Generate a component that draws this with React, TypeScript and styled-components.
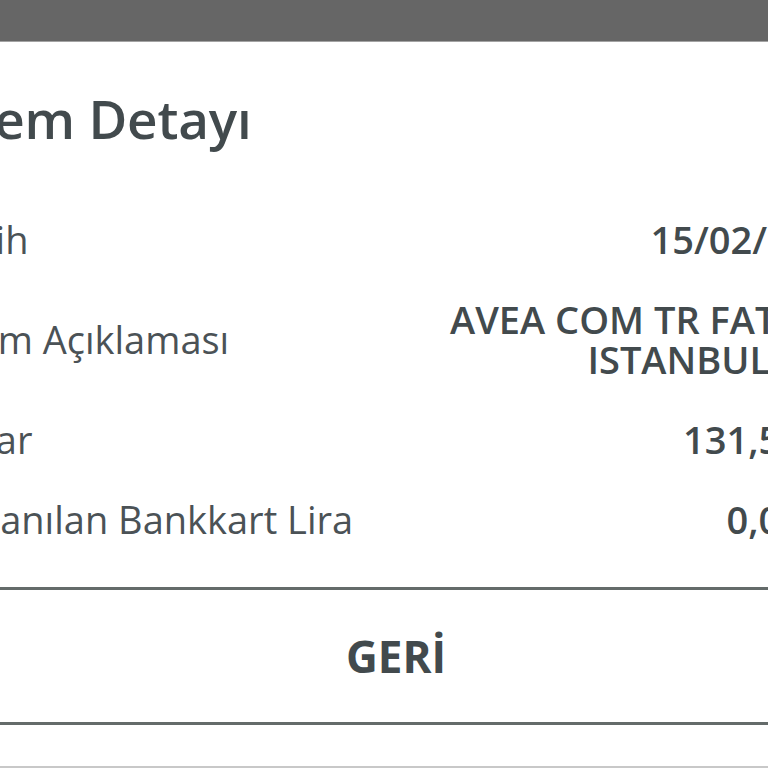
import styled, { createGlobalStyle } from 'styled-components';

const GlobalStyle = createGlobalStyle`
  html, body {
    margin: 0;
    padding: 0;
    background: #c8c8c8;
  }
  body {
    font-family: 'Open Sans', 'Liberation Sans', sans-serif;
    overflow: hidden;
  }
`;

const details = [
  { id: 'date', label: 'İşlem Tarih', value: ['15/02/2017'] },
  { id: 'desc', label: 'İşlem Açıklaması', value: ['AVEA COM TR FATURA', 'ISTANBUL TUR'] },
  { id: 'amount', label: 'Tutar', value: ['131,50 TL'] },
  { id: 'points', label: 'Kazanılan Bankkart Lira', value: ['0,00 TL'] },
];

const App = () => {
  return (
    <>
      <GlobalStyle />
      <Screen>
        <Backdrop />
        <Dialog>
          <Body>
            <Title>İşlem Detayı</Title>
            <List>
              {details.map((item) => (
                <Row key={item.id}>
                  <Label>{item.id === 'date' ? 'Tarih' : item.label}</Label>
                  <Value>
                    {item.value.map((line) => (
                      <span key={line}>{line}</span>
                    ))}
                  </Value>
                </Row>
              ))}
            </List>
          </Body>
          <Actions>
            <BackButton type="button">GERİ</BackButton>
          </Actions>
        </Dialog>
      </Screen>
    </>
  );
};

const Screen = styled.div`
  width: 768px;
  height: 768px;
  overflow: hidden;
  display: flex;
  flex-direction: column;
  background: #c8c8c8;
`;

const Backdrop = styled.div`
  height: 41px;
  flex-shrink: 0;
  background: #666666;
  border-bottom: 1px solid #a3a3a3;
`;

const Dialog = styled.section`
  width: 980px;
  margin-left: -94px;
  background: #ffffff;
  padding-bottom: 41px;
  flex-shrink: 0;
`;

const Body = styled.div`
  padding: 41px 32px 28px;
`;

const Title = styled.h2`
  margin: 0;
  font-size: 53px;
  line-height: 72px;
  font-weight: 600;
  color: #424a4d;
  letter-spacing: -0.2px;
`;

const List = styled.div`
  margin-top: 44px;
  display: flex;
  flex-direction: column;
`;

const Row = styled.div`
  display: flex;
  align-items: center;
  justify-content: space-between;
  padding: 20px 0;
  font-size: 38px;
  line-height: 40px;
`;

const Label = styled.span`
  font-weight: 400;
  color: #4b5256;
`;

const Value = styled.span`
  display: flex;
  flex-direction: column;
  align-items: flex-end;
  text-align: right;
  font-weight: 600;
  color: #424a4d;
`;

const Actions = styled.div`
  height: 132px;
  display: flex;
  align-items: center;
  justify-content: center;
  border-top: 3px solid #646b6a;
  border-bottom: 3px solid #646b6a;
`;

const BackButton = styled.button`
  border: none;
  background: none;
  padding: 0;
  font-family: inherit;
  font-size: 44px;
  font-weight: 700;
  color: #424a4d;
  cursor: pointer;
`;

export default App;
